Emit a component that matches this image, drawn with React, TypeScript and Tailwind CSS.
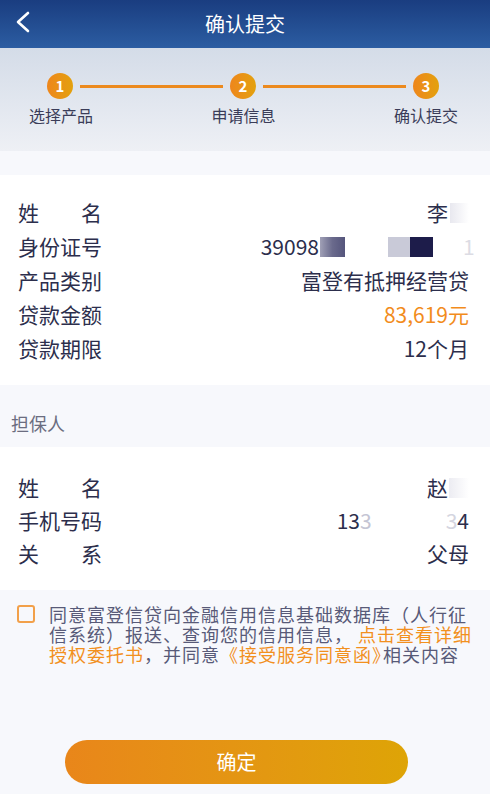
const font = { fontFamily: '"Noto Sans CJK SC", "Noto Sans", sans-serif' };

type Row = { label: [string, string] | string; value: React.ReactNode; orange?: boolean };

function Label({ label }: { label: [string, string] | string }) {
  if (typeof label === "string") return <span>{label}</span>;
  return (
    <span className="flex w-[84px] justify-between">
      <span>{label[0]}</span>
      <span>{label[1]}</span>
    </span>
  );
}

function InfoRows({ rows, rowHeight }: { rows: Row[]; rowHeight: string }) {
  return (
    <div>
      {rows.map((row, i) => (
        <div key={i} className={`flex ${rowHeight} items-center justify-between pl-[18px] pr-[21px] text-[21px] text-[#2c2e4c]`}>
          <Label label={row.label} />
          <span className={`flex items-center ${row.orange ? "text-[#f28c1c]" : ""}`}>{row.value}</span>
        </div>
      ))}
    </div>
  );
}

function Step({ n }: { n: number }) {
  return (
    <span className="grid size-[26px] shrink-0 place-items-center rounded-full bg-gradient-to-r from-[#ee861c] to-[#e3a10c] text-[15px] font-bold text-white">
      {n}
    </span>
  );
}

export default function App() {
  const applicant: Row[] = [
    {
      label: ["姓", "名"],
      value: (
        <>
          李<span className="ml-[2px] h-[20px] w-[19px] bg-gradient-to-r from-[#e8e8ef] to-white" />
        </>
      )
    },
    {
      label: "身份证号",
      value: (
        <>
          39098
          <span className="ml-[1px] h-[20px] w-[25px] bg-gradient-to-r from-[#a0a0b6] via-[#6a6a8c] to-[#55557c]" />
          <span className="ml-[43px] h-[20px] w-[22px] bg-[#c9cad8]" />
          <span className="h-[20px] w-[23px] bg-[#1d1c4a]" />
          <span className="ml-[30px] w-[6px] text-[#dcdce4]">1</span>
        </>
      )
    },
    { label: "产品类别", value: "富登有抵押经营贷" },
    { label: "贷款金额", value: "83,619元", orange: true },
    { label: "贷款期限", value: "12个月" }
  ];

  const guarantor: Row[] = [
    {
      label: ["姓", "名"],
      value: (
        <>
          赵<span className="ml-[1px] h-[20px] w-[20px] bg-gradient-to-r from-[#ececf2] to-white" />
        </>
      )
    },
    {
      label: "手机号码",
      value: (
        <>
          13<span className="text-[#c4c5d4]">3</span>
          <span className="w-[74px]" />
          <span className="text-[#d4d5e0]">3</span>4
        </>
      )
    },
    { label: ["关", "系"], value: "父母" }
  ];

  return (
    <div className="flex min-h-[794px] flex-col bg-[#f7f8fc]" style={font}>
      <header className="relative flex h-[48px] items-center justify-center bg-gradient-to-b from-[#1a3d80] to-[#2c5da2]">
        <svg className="absolute left-[14px] top-[11px]" width="18" height="22" viewBox="0 0 18 22" fill="none">
          <path d="M14 2 L4 11 L14 20" stroke="white" strokeWidth="2.6" strokeLinecap="round" strokeLinejoin="round" />
        </svg>
        <h1 className="text-[20px] text-white">确认提交</h1>
      </header>

      <section className="h-[103px] bg-gradient-to-b from-[#d4dce8] to-[#eef0f5] pt-[25px]">
        <div className="flex items-center pl-[47px] pr-[51px]">
          <Step n={1} />
          <span className="mx-[7px] h-[3px] flex-1 bg-[#ec8a1e]" />
          <Step n={2} />
          <span className="mx-[7px] h-[3px] flex-1 bg-[#ec8a1e]" />
          <Step n={3} />
        </div>
        <div className="mt-[5px] flex justify-between pl-[29px] pr-[32px] text-[16px] leading-[22px] text-[#3a3c58]">
          <span>选择产品</span>
          <span>申请信息</span>
          <span>确认提交</span>
        </div>
      </section>

      <div className="h-[24px]" />

      <section className="bg-white pb-[19px] pt-[21px]">
        <InfoRows rows={applicant} rowHeight="h-[34px]" />
      </section>

      <div className="pb-[12px] pl-[11px] pt-[26px] text-[18px] leading-[24px] text-[#6b6d80]">担保人</div>

      <section className="bg-white pb-[20px] pt-[24px]">
        <InfoRows rows={guarantor} rowHeight="h-[33px]" />
      </section>

      <section className="flex gap-[14px] pl-[17px] pr-[18px] pt-[14px] text-[18px] leading-[20px] tracking-[1px] text-[#585a78]">
        <span className="mt-[1px] size-[18px] shrink-0 rounded-[3px] border-2 border-[#f2a04a]" />
        <div className="flex-1 whitespace-nowrap">
          <div>同意富登信贷向金融信用信息基础数据库（人行征</div>
          <div className="flex justify-between">
            <span>信系统）报送、查询您的信用信息，</span>
            <span className="text-[#f2901e]">点击查看详细</span>
          </div>
          <div>
            <span className="text-[#f2901e]">授权委托书</span>，<span>并同意</span>
            <span className="mr-[-8px] text-[#f2901e]">《接受服务同意函》</span>相关内容
          </div>
        </div>
      </section>

      <button className="ml-[65px] mt-[76px] h-[44px] w-[343px] rounded-full bg-gradient-to-r from-[#e9861a] to-[#dea406] text-[20px] text-white">
        确定
      </button>
    </div>
  );
}
